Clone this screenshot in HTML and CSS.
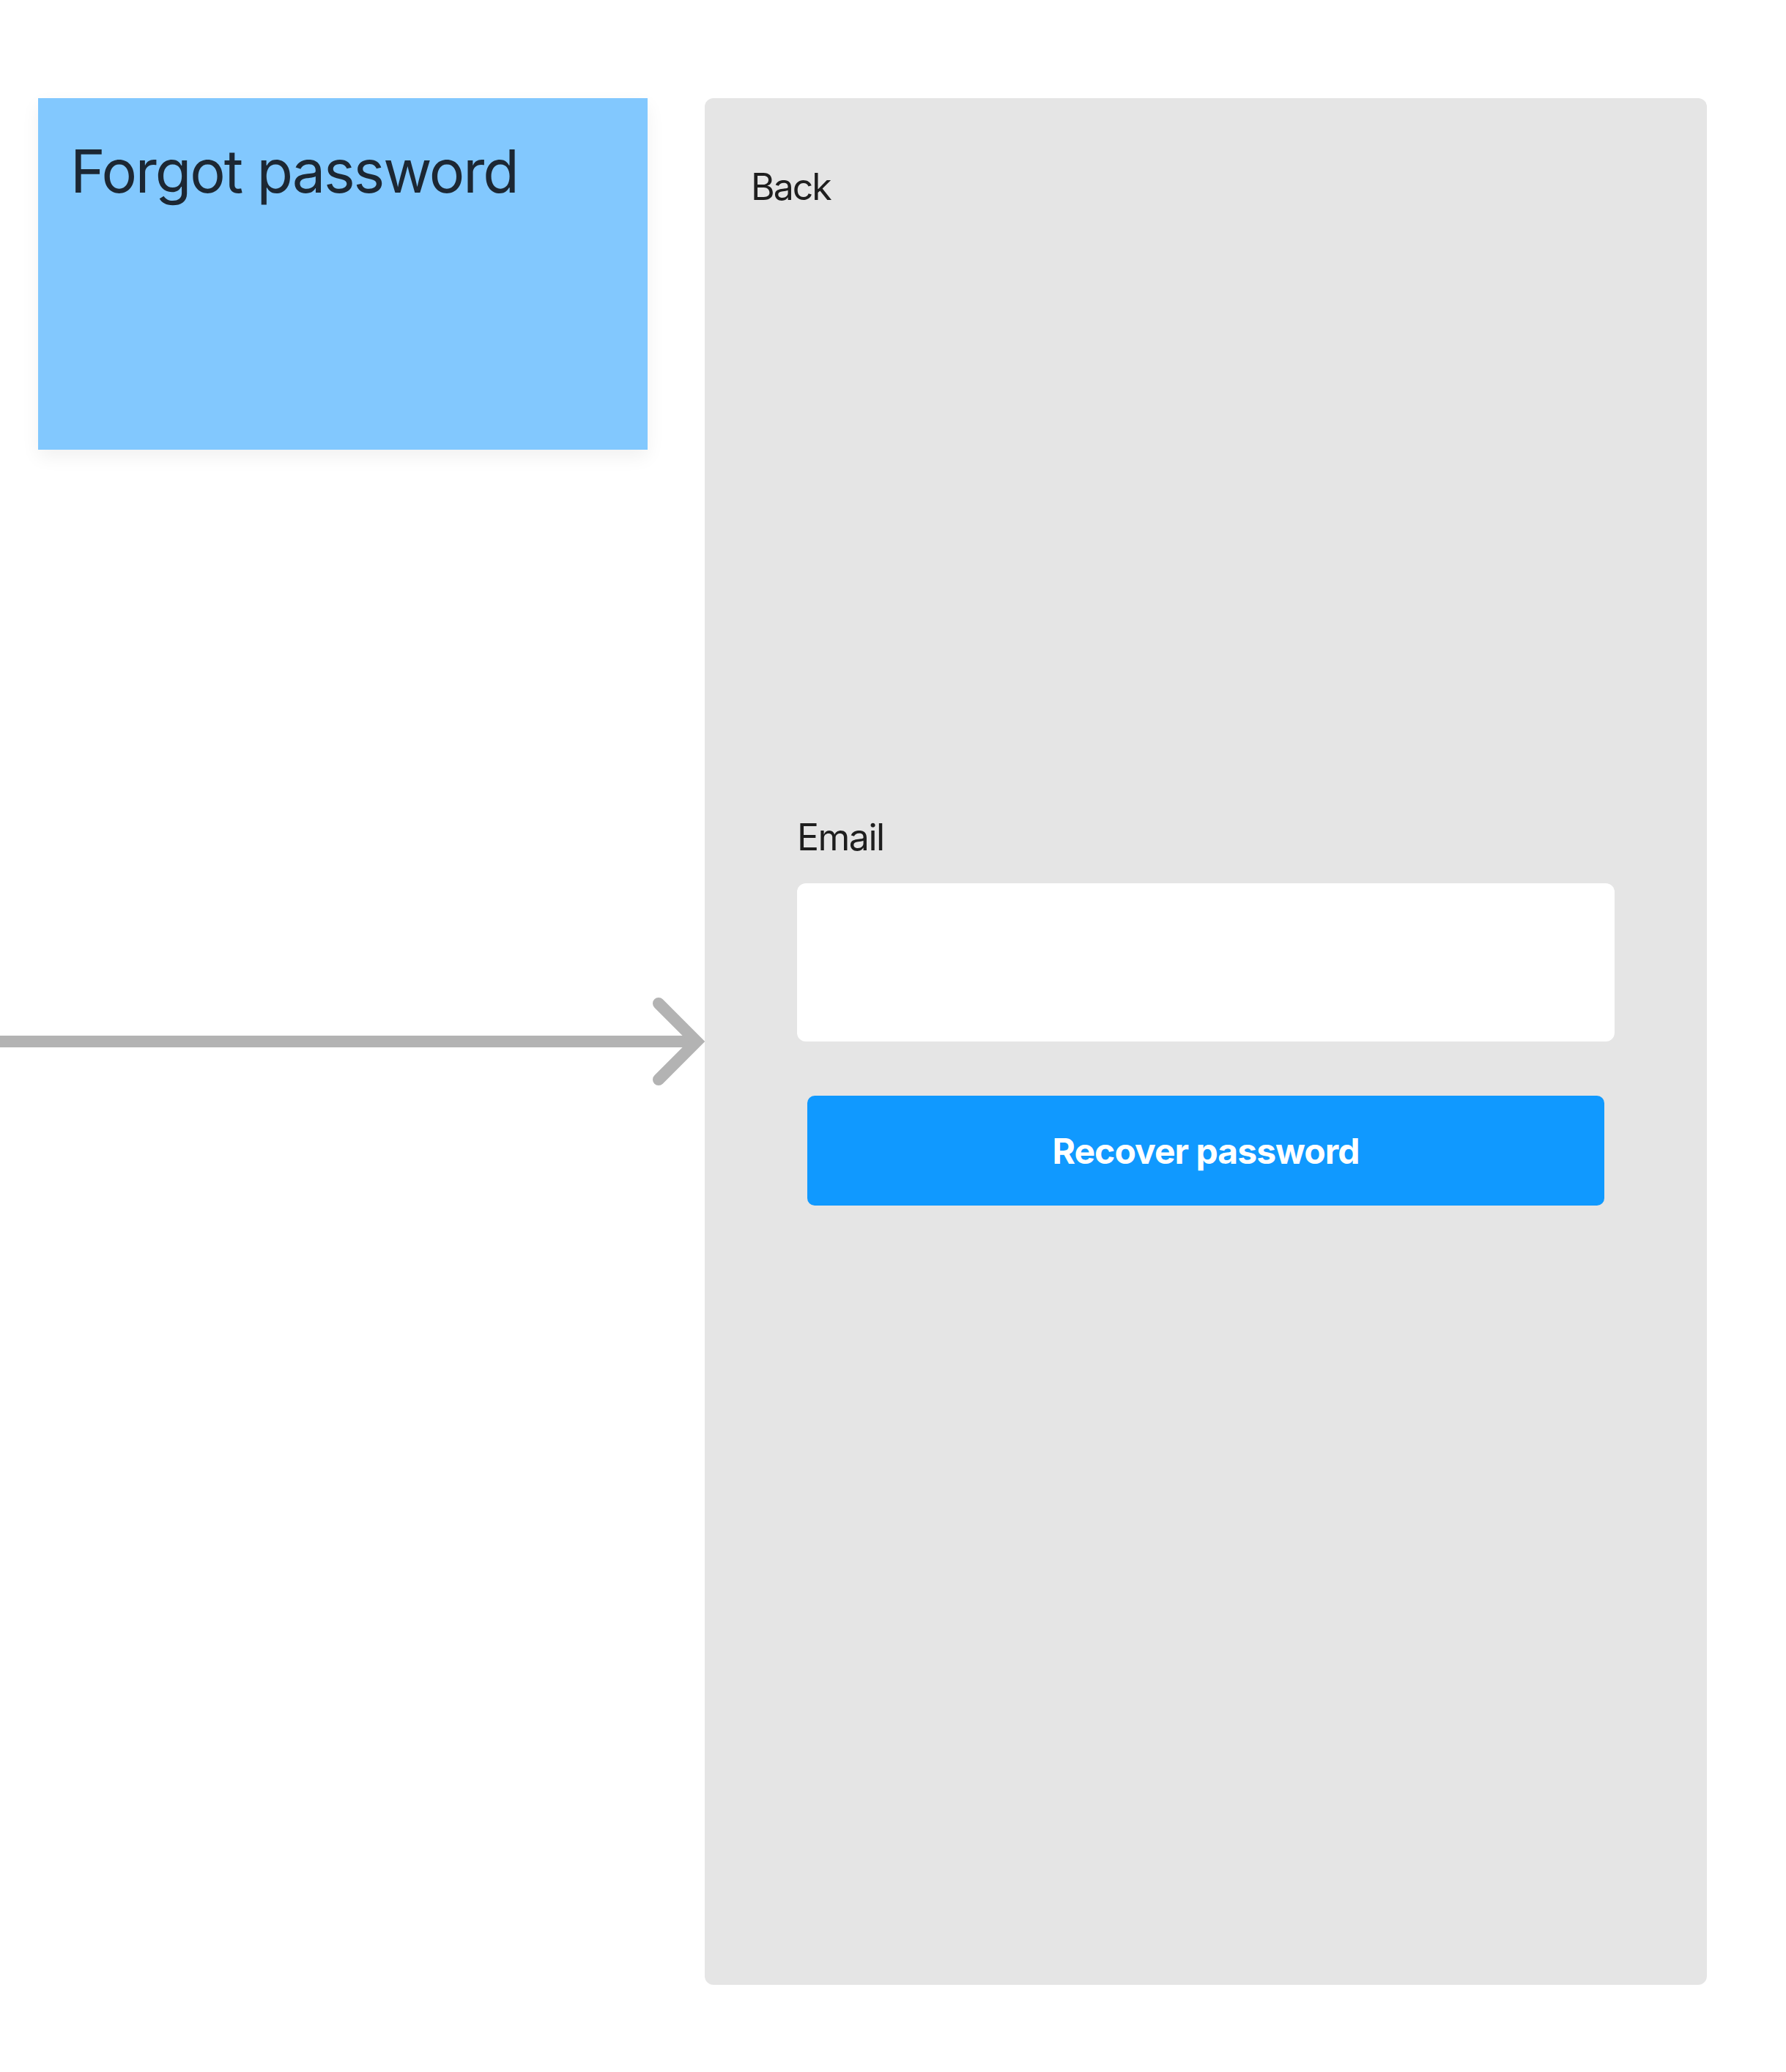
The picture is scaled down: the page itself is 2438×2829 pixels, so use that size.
FILE: index.html
```html
<!DOCTYPE html>
<html lang="en">
<head>
	<meta charset="UTF-8">
	<meta name="viewport" content="width=device-width, initial-scale=1.0">
	<title>Forgot password</title>
	<link rel="stylesheet" href="styles.css">
</head>
<body>
	<div class="board">
		<div class="side">
			<div class="sticky">
				<h1 class="sticky-title">Forgot password</h1>
			</div>
			<svg class="connector" width="962" height="124" viewBox="0 0 962 124">
				<line x1="0" y1="62" x2="950" y2="62" stroke="#b3b3b3" stroke-width="16" />
				<polyline points="899,10 951,62 899,114" fill="none" stroke="#b3b3b3" stroke-width="16" stroke-linecap="round" stroke-linejoin="miter" />
			</svg>
		</div>
		<section class="screen">
			<a class="back" href="#">Back</a>
			<form class="recover-form">
				<label class="field-label" for="email">Email</label>
				<input class="field-input" type="email" id="email" name="email">
				<button class="submit" type="submit">Recover password</button>
			</form>
		</section>
	</div>
</body>
</html>
```

FILE: styles.css
```css
* {
	margin: 0;
	padding: 0;
	box-sizing: border-box;
}
body {
	background-color: #fff;
	font-family: Inter, "Noto Sans", sans-serif;
	color: #1e1e1e;
}
.board {
	display: flex;
	align-items: flex-start;
	padding-top: 134px;
}
.side {
	width: 962px;
	display: flex;
	flex-direction: column;
}
.sticky {
	margin-left: 52px;
	width: 832px;
	height: 480px;
	background-color: #82c8fe;
	padding: 60px 44px;
	box-shadow: 0 10px 24px rgba(0, 0, 0, 0.06);
}
.sticky-title {
	font-size: 81px;
	line-height: 1;
	font-weight: 400;
	letter-spacing: -0.027em;
	color: #1c2733;
}
.connector {
	display: block;
	margin-top: 746px;
}
.screen {
	width: 1368px;
	height: 2576px;
	background-color: #e5e5e5;
	border-radius: 12px;
	padding-top: 96px;
}
.back {
	display: block;
	margin-left: 63px;
	font-size: 50px;
	line-height: 1;
	letter-spacing: -0.04em;
	color: #1e1e1e;
	text-decoration: none;
}
.recover-form {
	display: flex;
	flex-direction: column;
	padding: 0 126px;
	margin-top: 838px;
}
.field-label {
	font-size: 50px;
	line-height: 1;
	letter-spacing: -0.03em;
	margin-bottom: 38px;
}
input, button {
	appearance: none;
	border: none;
	outline: none;
	background: none;
	font-family: inherit;
}
.field-input {
	height: 216px;
	background-color: #fff;
	border-radius: 12px;
}
.submit {
	margin: 74px 14px 0;
	height: 150px;
	background-color: #1099ff;
	border-radius: 10px;
	color: #fff;
	font-size: 48px;
	font-weight: 700;
	letter-spacing: -0.02em;
	cursor: pointer;
}
```
